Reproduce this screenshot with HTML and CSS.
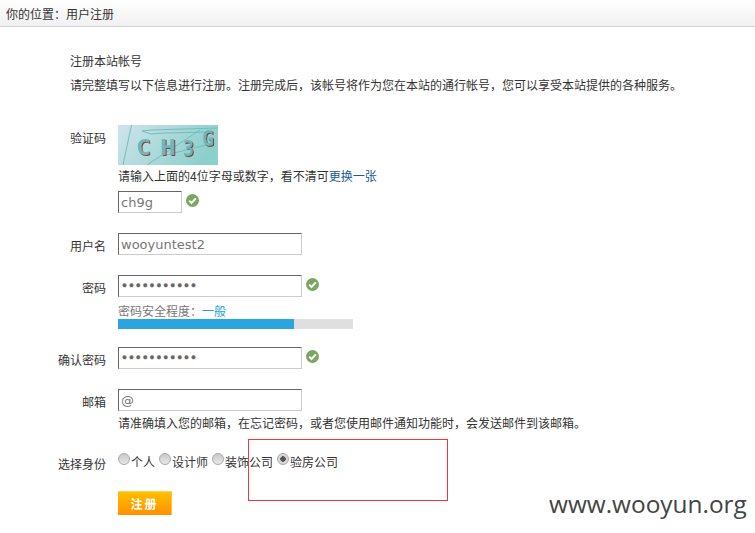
FILE: index.html
```html
<!DOCTYPE html>
<html lang="zh-CN">
<head>
<meta charset="utf-8">
<title>用户注册</title>
<link rel="stylesheet" href="styles.css">
</head>
<body>
<header class="crumb">你的位置：用户注册</header>
<section class="intro">
  <p>注册本站帐号</p>
  <p>请完整填写以下信息进行注册。注册完成后，该帐号将作为您在本站的通行帐号，您可以享受本站提供的各种服务。</p>
</section>
<form class="form">
  <div class="row">
    <label class="label">验证码</label>
    <div class="field">
      <svg class="captcha" width="100" height="40" viewBox="0 0 100 40">
        <defs>
          <linearGradient id="cg" x1="0" y1="0" x2="1" y2="0.3">
            <stop offset="0" stop-color="#d0e4ec"/>
            <stop offset="1" stop-color="#8cd0cc"/>
          </linearGradient>
        </defs>
        <rect width="100" height="40" fill="url(#cg)"/>
        <g fill="none" stroke="#74bdbd" stroke-width="1">
          <path d="M13.5 0 L5 40"/>
          <path d="M24 6 L34 5 L100 3"/>
          <path d="M24 6 L33 9 L46 8 L90 7"/>
          <path d="M29 40 L82 5"/>
          <path d="M48 30 L96 18"/>
        </g>
        <g class="cap-text">
          <text x="18" y="30" textLength="15" lengthAdjust="spacingAndGlyphs">C</text><text x="42" y="30" textLength="16" lengthAdjust="spacingAndGlyphs">H</text><text x="65" y="31" textLength="11" lengthAdjust="spacingAndGlyphs">3</text><text x="84" y="21" textLength="12" lengthAdjust="spacingAndGlyphs">G</text>
        </g>
      </svg>
      <p class="hint">请输入上面的4位字母或数字，看不清可<a class="link" href="#">更换一张</a></p>
      <div class="check-line">
        <input class="input input-short" type="text" value="ch9g">
        <svg class="ok" width="13" height="13" viewBox="0 0 13 13"><circle cx="6.5" cy="6.5" r="6.5" fill="#79a660"/><path d="M3.2 6.6 L5.5 9 L9.9 4.4" fill="none" stroke="#fff" stroke-width="2"/></svg>
      </div>
    </div>
  </div>
  <div class="row row-gap">
    <label class="label">用户名</label>
    <div class="field"><input class="input" type="text" value="wooyuntest2"></div>
  </div>
  <div class="row row-gap">
    <label class="label">密码</label>
    <div class="field">
      <div class="check-line">
        <input class="input input-pass" type="password" value="wooyuntest2">
        <svg class="ok" width="13" height="13" viewBox="0 0 13 13"><circle cx="6.5" cy="6.5" r="6.5" fill="#79a660"/><path d="M3.2 6.6 L5.5 9 L9.9 4.4" fill="none" stroke="#fff" stroke-width="2"/></svg>
      </div>
      <p class="strength">密码安全程度：<span class="level">一般</span></p>
      <div class="meter"><div class="meter-fill"></div></div>
    </div>
  </div>
  <div class="row row-gap-s">
    <label class="label">确认密码</label>
    <div class="field">
      <div class="check-line">
        <input class="input input-pass" type="password" value="wooyuntest2">
        <svg class="ok" width="13" height="13" viewBox="0 0 13 13"><circle cx="6.5" cy="6.5" r="6.5" fill="#79a660"/><path d="M3.2 6.6 L5.5 9 L9.9 4.4" fill="none" stroke="#fff" stroke-width="2"/></svg>
      </div>
    </div>
  </div>
  <div class="row row-gap">
    <label class="label">邮箱</label>
    <div class="field">
      <input class="input" type="text" value="@">
      <p class="hint hint-tight">请准确填入您的邮箱，在忘记密码，或者您使用邮件通知功能时，会发送邮件到该邮箱。</p>
    </div>
  </div>
  <div class="row row-gap-radio">
    <label class="label">选择身份</label>
    <div class="field radios">
      <label class="opt"><input class="radio" type="radio" name="role">个人</label>
      <label class="opt"><input class="radio" type="radio" name="role">设计师</label>
      <label class="opt"><input class="radio" type="radio" name="role">装饰公司</label>
      <label class="opt"><input class="radio" type="radio" name="role" checked>验房公司</label>
    </div>
  </div>
  <div class="row row-submit">
    <span></span>
    <button class="submit" type="button">注册</button>
  </div>
</form>
<div class="redbox"></div>
<div class="mark">www.wooyun.org</div>
</body>
</html>
```
FILE: styles.css
```css
* { box-sizing: border-box; }
html, body { margin: 0; padding: 0; }
body {
  position: relative;
  height: 533px;
  overflow: hidden;
  background: #fff;
  color: #333;
  font: 12px/22px "Noto Sans CJK SC", sans-serif;
}
p { margin: 0; }
.crumb {
  height: 27px;
  line-height: 28px;
  padding-left: 6px;
  background: linear-gradient(#fff, #f0f0f0);
  border-bottom: 1px solid #d6d6d6;
}
.intro { padding: 22px 0 0 70px; }
.intro p { line-height: 24px; }
.form { margin-top: 28px; }
.row {
  display: grid;
  grid-template-columns: 106px 1fr;
  column-gap: 12px;
}
.row-gap { margin-top: 20px; }
.row-gap-s { margin-top: 18px; }
.row-gap-radio { margin-top: 17px; }
.row-submit { margin-top: 18px; }
.label { height: 22px; text-align: right; line-height: 26px; }
.captcha { display: block; }
.hint { line-height: 22px; }
.hint-tight { margin-top: 1px; }
.link { color: #1b5a96; text-decoration: none; }
.check-line { display: flex; align-items: flex-start; gap: 4px; }
.hint + .check-line { margin-top: 4px; }
.input {
  display: block;
  width: 184px;
  height: 22px;
  padding: 0 2px;
  border: 1px solid #ccc;
  border-top-color: #666;
  border-left-color: #666;
  background: #fff;
  color: #777;
  font: 13px "DejaVu Sans", sans-serif;
  outline: none;
}
.input-short { width: 64px; }
.input-pass { font-size: 11.7px; color: #666; -webkit-text-stroke: 0.5px #666; }
.ok { margin-top: 3px; flex: none; }
.strength { margin-top: 6px; line-height: 16px; color: #777; }
.level { color: #2a9fd8; }
.meter { width: 235px; height: 10px; background: #dfdfdf; }
.meter-fill { width: 176px; height: 10px; background: #2ca5df; }
.radios { display: flex; height: 22px; gap: 4px; }
.opt { display: flex; line-height: 22px; }
.radio {
  appearance: none;
  -webkit-appearance: none;
  width: 12px;
  height: 12px;
  margin: 2px 1px 0 0;
  border: 1px solid #aaa;
  border-radius: 50%;
  background: linear-gradient(#c8c8c8, #e8e8e8);
}
.radio:checked { background: radial-gradient(circle, #555 0 2.5px, #d8d8d8 3px); }
.submit {
  display: block;
  width: 54px;
  height: 24px;
  padding: 0;
  border: 0;
  border-top: 1px solid #ffd34d;
  border-right: 1px solid #ffc04d;
  background: linear-gradient(#ffc000, #ff9000);
  color: #fff;
  font: bold 12px/22px "Noto Sans CJK SC", sans-serif;
  letter-spacing: 2px;
}
.cap-text {
  fill: #6fb6b9;
  font: 700 21px "DejaVu Sans Mono", monospace;
  filter: drop-shadow(1px 1px 0 #8f3b40);
}
.redbox {
  position: absolute;
  left: 248px;
  top: 439px;
  width: 200px;
  height: 62px;
  border: 1px solid #f03a3a;
}
.mark {
  position: absolute;
  left: 549px;
  top: 488px;
  color: #444;
  font: 24.4px/32px "Open Sans", sans-serif;
  white-space: nowrap;
}
```
